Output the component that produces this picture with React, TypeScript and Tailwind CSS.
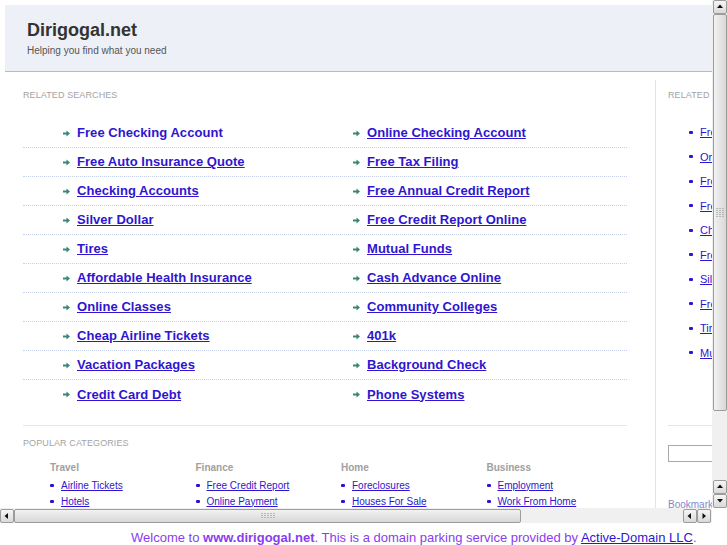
import React from "react"

const leftLinks = [
  "Free Checking Account",
  "Free Auto Insurance Quote",
  "Checking Accounts",
  "Silver Dollar",
  "Tires",
  "Affordable Health Insurance",
  "Online Classes",
  "Cheap Airline Tickets",
  "Vacation Packages",
  "Credit Card Debt",
]

const rightLinks = [
  "Online Checking Account",
  "Free Tax Filing",
  "Free Annual Credit Report",
  "Free Credit Report Online",
  "Mutual Funds",
  "Cash Advance Online",
  "Community Colleges",
  "401k",
  "Background Check",
  "Phone Systems",
]

const sideLinks = [
  "Free Checking Account",
  "Online Checking Account",
  "Free Auto Insurance Quote",
  "Free Tax Filing",
  "Checking Accounts",
  "Free Annual Credit Report",
  "Silver Dollar",
  "Free Credit Report Online",
  "Tires",
  "Mutual Funds",
]

const categories = [
  { title: "Travel", links: ["Airline Tickets", "Hotels"] },
  { title: "Finance", links: ["Free Credit Report", "Online Payment"] },
  { title: "Home", links: ["Foreclosures", "Houses For Sale"] },
  { title: "Business", links: ["Employment", "Work From Home"] },
]

function Arrow() {
  return (
    <svg width="7" height="7" viewBox="0 0 7 7" className="shrink-0">
      <path d="M0 2.5h3.5V0.5L7 3.5 3.5 6.5V4.5H0z" fill="#3a8678" />
    </svg>
  )
}

function SearchLink({ text, plain }: { text: string; plain?: boolean }) {
  return (
    <div className="flex w-[290px] shrink-0 items-center gap-[7px]">
      <Arrow />
      <a
        className={`text-[13px] font-bold leading-[16px] tracking-[0.05px] text-[#2f15cf] ${plain ? "" : "underline"}`}
      >
        {text}
      </a>
    </div>
  )
}

function Bullet() {
  return <span className="h-[3px] w-[4px] shrink-0 rounded-[1px] bg-[#2f15cf]" />
}

function ScrollButton({ dir }: { dir: "up" | "down" | "left" | "right" }) {
  const paths = {
    up: "M1 5L4 1.5 7 5z",
    down: "M1 2L4 5.5 7 2z",
    left: "M5 1L1.5 4 5 7z",
    right: "M2.5 1L6 4 2.5 7z",
  }
  return (
    <div className="flex h-[14px] w-[14px] items-center justify-center rounded-[2px] border border-[#9c9c9c] bg-gradient-to-b from-[#f6f6f6] to-[#d9d9d9]">
      <svg width="8" height="8" viewBox="0 0 8 8">
        <path d={paths[dir]} fill="#111" />
      </svg>
    </div>
  )
}

function Grip({ vertical }: { vertical?: boolean }) {
  const dots = Array.from({ length: 15 })
  return (
    <div className={`grid gap-[1px] ${vertical ? "grid-cols-3" : "grid-cols-5"}`}>
      {dots.map((_, i) => (
        <span key={i} className="h-[1px] w-[2px] bg-[#b5b5b5]" />
      ))}
    </div>
  )
}

export default function App() {
  return (
    <div className="h-[545px] w-[727px] overflow-hidden bg-white font-['Liberation_Sans',Arial,sans-serif]">
      <div className="flex h-[523px]">
        <div className="flex w-[712px] flex-col">
          {/* viewport */}
          <div className="h-[508px] overflow-hidden">
            <div className="w-[1000px] pl-[5px] pt-[5px]">
              <div className="h-[67px] border-b border-[#a9bbe6] bg-[#eef0f7] pl-[22px] pt-[15px]">
                <h1 className="text-[18px] font-bold leading-[20px] text-[#333]">Dirigogal.net</h1>
                <p className="mt-[5px] text-[10px] leading-[12px] text-[#555]">
                  Helping you find what you need
                </p>
              </div>

              <div className="mt-[8px] flex pl-[18px]">
                {/* main column */}
                <div className="w-[604px] shrink-0 pt-[10px]">
                  <div className="text-[9px] leading-[11px] tracking-[0.1px] text-[#a3a3a3]">
                    RELATED SEARCHES
                  </div>
                  <div className="mt-[18px]">
                    {leftLinks.map((l, i) => (
                      <div
                        key={l}
                        className={`flex h-[29px] items-center pl-[40px] ${
                          i < leftLinks.length - 1 ? "border-b border-dotted border-[#c4d0ea]" : ""
                        }`}
                      >
                        <SearchLink text={l} plain={i === 0} />
                        <SearchLink text={rightLinks[i]} />
                      </div>
                    ))}
                  </div>
                  <div className="mt-[16px] border-t border-[#e3e5f3] pt-[12px]">
                    <div className="text-[9px] leading-[11px] tracking-[0.1px] text-[#a3a3a3]">
                      POPULAR CATEGORIES
                    </div>
                    <div className="mt-[13px] flex pl-[27px]">
                      {categories.map((c) => (
                        <div key={c.title} className="w-[145.5px] shrink-0">
                          <div className="text-[10px] font-bold leading-[12px] text-[#a0a0a0]">
                            {c.title}
                          </div>
                          <div className="mt-[3px]">
                            {c.links.map((l) => (
                              <div key={l} className="flex h-[16px] items-center gap-[7px]">
                                <Bullet />
                                <a className="text-[10px] text-[#2f15cf] underline">{l}</a>
                              </div>
                            ))}
                          </div>
                        </div>
                      ))}
                    </div>
                  </div>
                </div>

                {/* sidebar */}
                <div className="ml-[28px] h-[430px] w-[300px] shrink-0 border-l border-[#dfe4f3] pl-[12px] pt-[10px]">
                  <div className="text-[9px] leading-[11px] tracking-[0.1px] text-[#a3a3a3]">
                    RELATED SEARCHES
                  </div>
                  <div className="mt-[19px] pl-[21px]">
                    {sideLinks.map((l) => (
                      <div key={l} className="flex h-[24.5px] items-center gap-[7px]">
                        <Bullet />
                        <a className="text-[11px] text-[#2f15cf] underline">{l}</a>
                      </div>
                    ))}
                  </div>
                  <div className="mt-[60px] border-t border-[#e3e5f3] pt-[19px]">
                    <div className="h-[17px] w-[150px] border border-[#a8a8a8] bg-white" />
                    <div className="mt-[37px] text-[10px] leading-[12px] text-[#7f88cc]">
                      Bookmark this page
                    </div>
                  </div>
                </div>
              </div>
            </div>
          </div>

          {/* horizontal scrollbar */}
          <div className="flex h-[15px] items-center bg-[#f0f0f0]">
            <ScrollButton dir="left" />
            <div className="flex h-[14px] w-[507px] items-center justify-center rounded-[2px] border border-[#9c9c9c] bg-gradient-to-b from-[#f2f2f2] to-[#d8d8d8]">
              <Grip />
            </div>
            <div className="flex-1" />
            <ScrollButton dir="left" />
            <ScrollButton dir="right" />
            <div className="w-[1px]" />
          </div>
        </div>

        {/* vertical scrollbar */}
        <div className="flex h-[508px] w-[15px] flex-col items-center bg-[#f0f0f0]">
          <ScrollButton dir="up" />
          <div className="flex h-[397px] w-[14px] items-center justify-center rounded-[2px] border border-[#9c9c9c] bg-gradient-to-r from-[#f2f2f2] to-[#d8d8d8]">
            <Grip vertical />
          </div>
          <div className="flex-1" />
          <ScrollButton dir="up" />
          <ScrollButton dir="down" />
        </div>
      </div>

      {/* footer */}
      <div className="whitespace-nowrap pl-[131px] pt-[7px] text-[13px] leading-[16px] text-[#8a3cf0]">
        Welcome to <b>www.dirigogal.net</b>. This is a domain parking service provided by{" "}
        <a className="text-[#2f15cf] underline">Active-Domain LLC</a>.
      </div>
    </div>
  )
}
